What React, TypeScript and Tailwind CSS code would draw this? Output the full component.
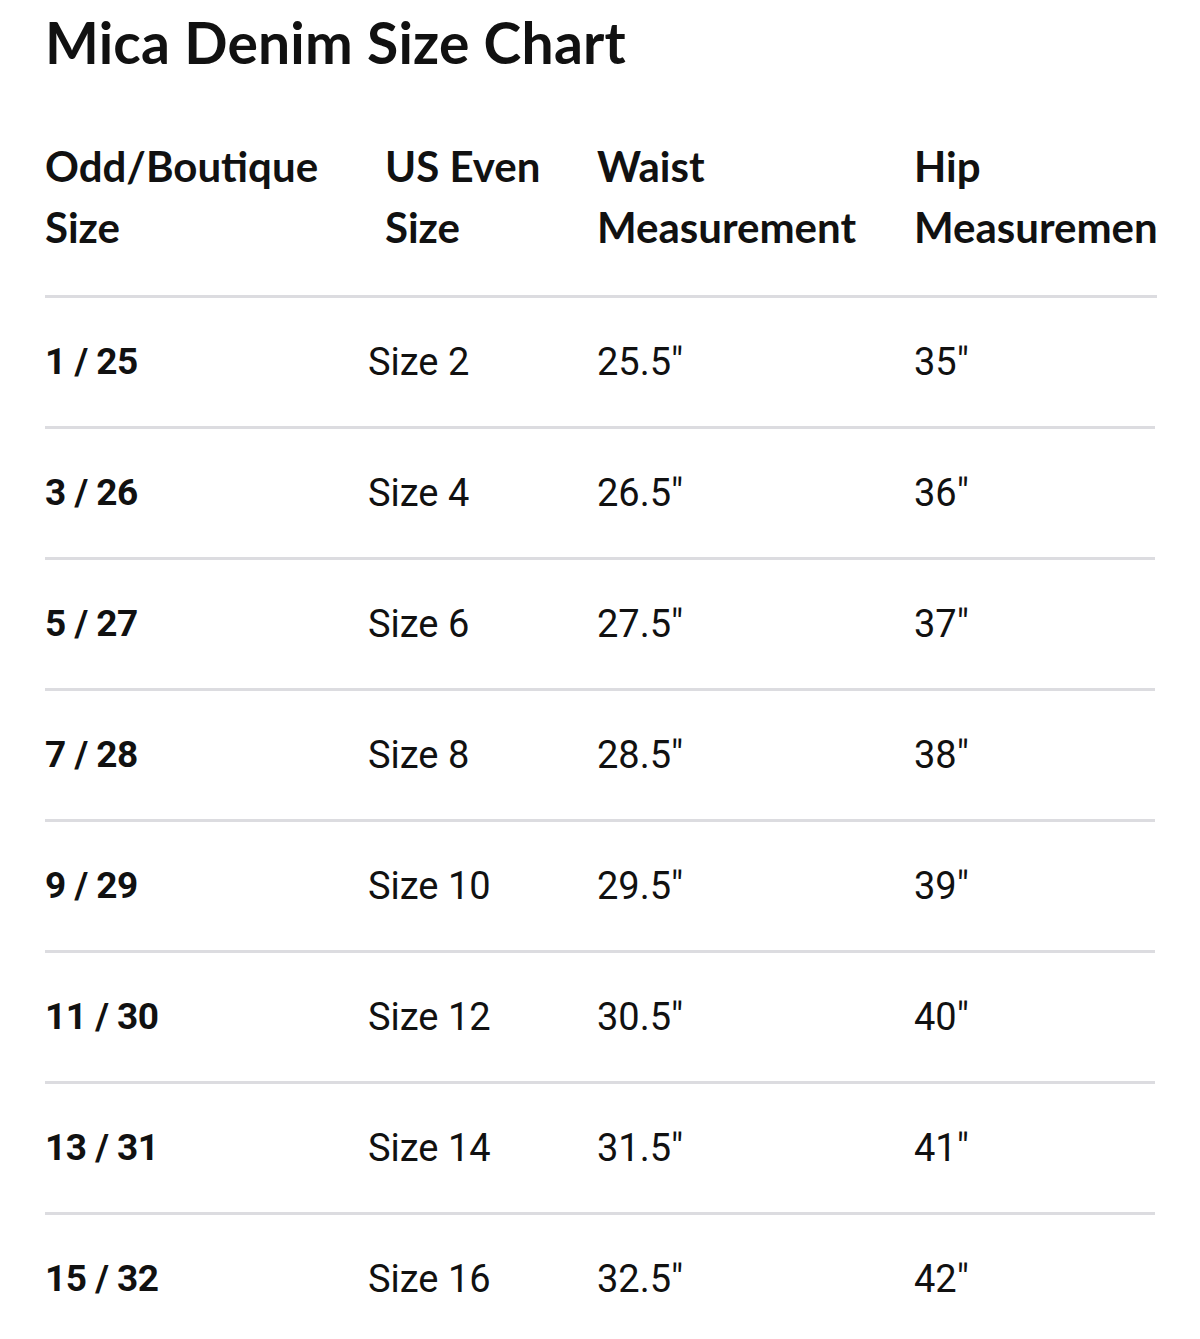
const rows = [
  ['1 / 25', 'Size 2', '25.5"', '35"'],
  ['3 / 26', 'Size 4', '26.5"', '36"'],
  ['5 / 27', 'Size 6', '27.5"', '37"'],
  ['7 / 28', 'Size 8', '28.5"', '38"'],
  ['9 / 29', 'Size 10', '29.5"', '39"'],
  ['11 / 30', 'Size 12', '30.5"', '40"'],
  ['13 / 31', 'Size 14', '31.5"', '41"'],
  ['15 / 32', 'Size 16', '32.5"', '42"'],
]

const App = () => {
  return (
    <div className="h-[1339px] w-[1200px] overflow-hidden bg-white px-[45px] text-[#111]">
      <h1 className="pt-[10px] font-['Lato',sans-serif] text-[57px] font-bold leading-[64px] tracking-[0.2px]">
        Mica Denim Size Chart
      </h1>

      <div className="mt-[62px] w-[1112px] overflow-hidden">
        <div className="grid grid-cols-[323px_229px_317px_1fr] border-b-[3px] border-[#dcdce0] pb-[37px] font-['Lato',sans-serif] text-[42px] font-bold leading-[61px]">
          <div>
            Odd/Boutique
            <br />
            Size
          </div>
          <div className="pl-[17px]">
            US Even
            <br />
            Size
          </div>
          <div>
            Waist
            <br />
            Measurement
          </div>
          <div className="whitespace-nowrap">
            Hip
            <br />
            Measurement
          </div>
        </div>

        {rows.map(r => (
          <div
            key={r[0]}
            className="grid h-[131px] w-[1110px] grid-cols-[323px_229px_317px_1fr] items-center border-b-[3px] border-[#dcdce0] font-['Roboto',sans-serif] text-[38px]"
          >
            <span className="text-[37px] font-bold tracking-[-0.5px]">{r[0]}</span>
            <span>{r[1]}</span>
            <span>{r[2]}</span>
            <span>{r[3]}</span>
          </div>
        ))}
      </div>
    </div>
  )
}

export default App
